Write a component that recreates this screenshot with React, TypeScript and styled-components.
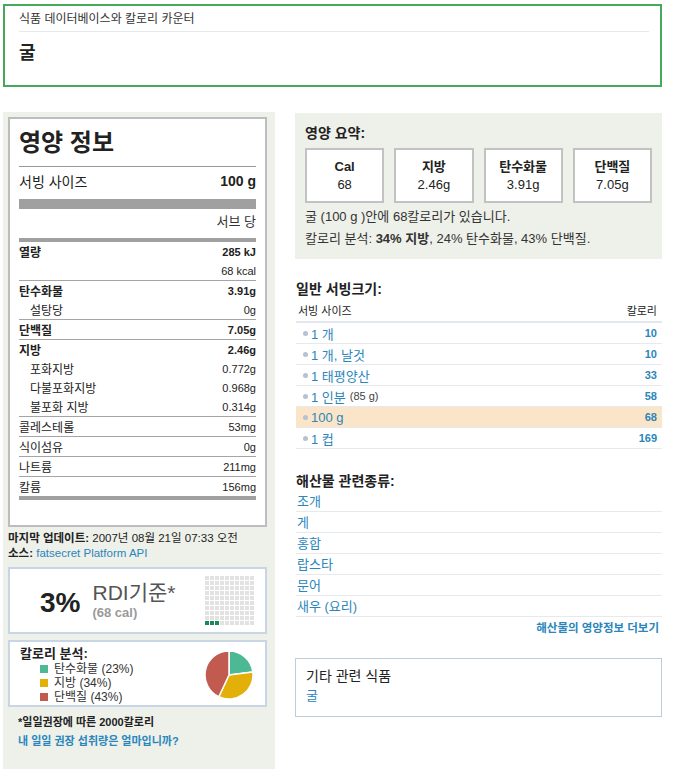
import React from 'react';
import styled, { createGlobalStyle } from 'styled-components';

const FONT = `"Liberation Sans", Arial, "Noto Sans CJK KR", sans-serif`;
const LINK = '#2a86bb';
const PANEL = '#eef0ea';

const GlobalStyle = createGlobalStyle`
  html, body {
    margin: 0;
    padding: 0;
    background: #fff;
    font-family: ${FONT};
    color: #333;
  }
`;

const Page = styled.div`
  padding: 4px 13px 0 3px;
`;

const Header = styled.header`
  border: 2px solid #46a85a;
  height: 79px;
  padding: 0 11px 0 14px;
`;

const Crumb = styled.div`
  font-size: 12px;
  line-height: 15px;
  padding: 6px 0 4px;
  color: #333;
  border-bottom: 1px solid #e4e9ef;
`;

const Title = styled.h1`
  margin: 0;
  padding-top: 9px;
  font-size: 18px;
  line-height: 24px;
  font-weight: bold;
  color: #222;
`;

const Columns = styled.div`
  display: flex;
  gap: 20px;
  margin-top: 25px;
`;

const LeftCol = styled.aside`
  width: 259px;
  flex: none;
  background: ${PANEL};
  padding: 5px 8px 40px 5px;
`;

const RightCol = styled.main`
  flex: 1;
  padding-top: 1px;
`;

/* ---------- nutrition facts ---------- */

const Facts = styled.section`
  background: #fff;
  border: 2px solid #bdbdbd;
  padding: 0 9px 25px;
`;

const FactsTitle = styled.h2`
  margin: 0;
  padding-top: 9px;
  padding-bottom: 8px;
  font-size: 24px;
  line-height: 30px;
  font-weight: bold;
  color: #222;
  border-bottom: 1px solid #999;
`;

const ServingLine = styled.div`
  display: flex;
  justify-content: space-between;
  align-items: center;
  height: 28px;
  padding-bottom: 4px;
  font-size: 14px;
  color: #222;
`;

const Strong = styled.b`
  font-weight: bold;
`;

const Bar = styled.div<{ $h: number }>`
  height: ${(p) => p.$h}px;
  background: #a0a0a0;
`;

const PerServe = styled.div`
  text-align: right;
  font-size: 13px;
  height: 29px;
  line-height: 26px;
  color: #333;
`;

const FactRow = styled.div<{ $indent?: boolean; $line?: boolean }>`
  display: flex;
  justify-content: space-between;
  align-items: center;
  height: 19px;
  font-size: 11px;
  color: #333;
  padding-left: ${(p) => (p.$indent ? '11px' : '0')};
  border-bottom: ${(p) => (p.$line ? '1px solid #a5a5a5' : 'none')};
`;

const FactLabel = styled.span<{ $bold?: boolean }>`
  font-size: 12px;
  font-weight: ${(p) => (p.$bold ? 'bold' : 'normal')};
  color: #222;
`;

const FactValue = styled.span<{ $bold?: boolean }>`
  font-weight: ${(p) => (p.$bold ? 'bold' : 'normal')};
  color: #222;
`;

const Meta = styled.div`
  font-size: 11.5px;
  line-height: 15px;
  color: #222;
  padding: 4px 0 0;
`;

const MetaLink = styled.a`
  color: ${LINK};
  text-decoration: none;
`;

const InfoBox = styled.div`
  background: #fff;
  border: 2px solid #c7d5e4;
  display: flex;
  align-items: center;
`;

const RdiBox = styled(InfoBox)`
  margin-top: 6px;
  height: 63px;
  padding: 0 11px 0 30px;
`;

const RdiPct = styled.div`
  font-size: 28px;
  font-weight: bold;
  color: #222;
  line-height: 30px;
  margin-top: 4px;
`;

const RdiText = styled.div`
  margin-left: 12px;
  display: flex;
  flex-direction: column;
`;

const RdiLabel = styled.span`
  font-size: 21px;
  line-height: 24px;
  color: #555;
`;

const RdiCal = styled.span`
  font-size: 13px;
  line-height: 16px;
  font-weight: bold;
  color: #9a9a9a;
`;

const Grid = styled.div`
  margin-left: auto;
  display: grid;
  grid-template-columns: repeat(10, 4px);
  grid-auto-rows: 4px;
  gap: 1px;
`;

const Cell = styled.span<{ $on?: boolean }>`
  background: ${(p) => (p.$on ? '#1a8a5c' : '#e2e2e2')};
`;

const BreakBox = styled(InfoBox)`
  margin-top: 6px;
  height: 63px;
  padding: 0 11px 0 10px;
  align-items: flex-start;
`;

const BreakText = styled.div`
  padding-top: 3px;
`;

const BreakTitle = styled.div`
  font-size: 13px;
  font-weight: bold;
  line-height: 17px;
  color: #222;
`;

const Legend = styled.ul`
  list-style: none;
  margin: 0;
  padding: 0 0 0 20px;
`;

const LegendItem = styled.li`
  display: flex;
  align-items: center;
  gap: 6px;
  font-size: 12px;
  line-height: 14px;
  color: #333;
`;

const Swatch = styled.span<{ $c: string }>`
  width: 8px;
  height: 8px;
  background: ${(p) => p.$c};
`;

const PieWrap = styled.div`
  margin-left: auto;
  margin-top: 8px;
`;

const Note = styled.div<{ $link?: boolean }>`
  font-size: 11px;
  font-weight: bold;
  line-height: 19px;
  padding-left: 10px;
  color: ${(p) => (p.$link ? LINK : '#222')};
`;

const Notes = styled.div`
  padding-top: 6px;
`;

/* ---------- right column ---------- */

const Summary = styled.section`
  background: ${PANEL};
  padding: 10px 10px 9px;
`;

const SectionTitle = styled.h3`
  margin: 0;
  font-size: 14px;
  line-height: 20px;
  font-weight: bold;
  color: #222;
`;

const Tiles = styled.div`
  display: grid;
  grid-template-columns: repeat(4, 1fr);
  gap: 10px;
  margin-top: 5px;
`;

const Tile = styled.div`
  background: #fff;
  border: 2px solid #c2c2c2;
  height: 51px;
  display: flex;
  flex-direction: column;
  align-items: center;
  justify-content: center;
  font-size: 13px;
  line-height: 18px;
  color: #222;
`;

const TileLabel = styled.b`
  font-weight: bold;
`;

const SumLine = styled.div`
  font-size: 13px;
  line-height: 22px;
  color: #333;
`;

const SumLines = styled.div`
  margin-top: 3px;
`;

const Section = styled.section<{ $gap?: number }>`
  margin-top: ${(p) => p.$gap ?? 20}px;
  padding-left: 1px;
`;

const TableHead = styled.div`
  display: flex;
  justify-content: space-between;
  font-size: 11px;
  line-height: 19px;
  color: #222;
  padding: 3px 5px 0 2px;
  border-bottom: 2px solid #e3e8ee;
`;

const ServRow = styled.div<{ $active?: boolean }>`
  display: flex;
  align-items: center;
  height: 20px;
  padding: 0 5px 0 7px;
  border-bottom: 1px solid #e6eaef;
  background: ${(p) => (p.$active ? '#fbe5c8' : 'transparent')};
`;

const Dot = styled.span`
  width: 5px;
  height: 5px;
  border-radius: 50%;
  background: #b6c2d1;
  margin-right: 3px;
`;

const ServLink = styled.a`
  font-size: 13px;
  color: ${LINK};
  text-decoration: none;
`;

const ServNote = styled.span`
  font-size: 11px;
  color: #444;
  margin-left: 4px;
`;

const ServCal = styled.span`
  margin-left: auto;
  font-size: 11px;
  font-weight: bold;
  color: ${LINK};
`;

const ListRow = styled.div`
  height: 20px;
  line-height: 20px;
  border-bottom: 1px solid #e6eaef;
  padding-left: 1px;
`;

const ListLink = styled.a`
  font-size: 13px;
  color: ${LINK};
  text-decoration: none;
`;

const More = styled.a`
  display: block;
  text-align: right;
  font-size: 11.5px;
  font-weight: bold;
  line-height: 22px;
  padding-right: 3px;
  color: ${LINK};
  text-decoration: none;
`;

const Related = styled.section`
  margin-top: 19px;
  border: 1px solid #bccddc;
  padding: 9px 10px 12px;
`;

const RelatedTitle = styled.div`
  font-size: 14px;
  line-height: 17px;
  color: #222;
`;

/* ---------- data ---------- */

const facts: { label: string; value: string; bold?: boolean; indent?: boolean; line?: boolean }[] = [
  { label: '열량', value: '285 kJ', bold: true },
  { label: '', value: '68 kcal', line: true },
  { label: '탄수화물', value: '3.91g', bold: true },
  { label: '설탕당', value: '0g', indent: true, line: true },
  { label: '단백질', value: '7.05g', bold: true, line: true },
  { label: '지방', value: '2.46g', bold: true },
  { label: '포화지방', value: '0.772g', indent: true },
  { label: '다불포화지방', value: '0.968g', indent: true },
  { label: '불포화 지방', value: '0.314g', indent: true, line: true },
  { label: '콜레스테롤', value: '53mg', line: true },
  { label: '식이섬유', value: '0g', line: true },
  { label: '나트륨', value: '211mg', line: true },
  { label: '칼륨', value: '156mg' },
];

const servings: { label: string; note?: string; cal: string; active?: boolean }[] = [
  { label: '1 개', cal: '10' },
  { label: '1 개, 날것', cal: '10' },
  { label: '1 태평양산', cal: '33' },
  { label: '1 인분', note: '(85 g)', cal: '58' },
  { label: '100 g', cal: '68', active: true },
  { label: '1 컵', cal: '169' },
];

const seafood = ['조개', '게', '홍합', '랍스타', '문어', '새우 (요리)'];

const slices = [
  { pct: 23, color: '#4cb894' },
  { pct: 34, color: '#e2b008' },
  { pct: 43, color: '#c15a4f' },
];

const Pie: React.FC = () => {
  const r = 24;
  const c = 25;
  let start = -90;
  return (
    <svg width="50" height="50" viewBox="0 0 50 50">
      {slices.map((s) => {
        const sweep = (s.pct / 100) * 360;
        const a0 = (start * Math.PI) / 180;
        const a1 = ((start + sweep) * Math.PI) / 180;
        start += sweep;
        const x0 = c + r * Math.cos(a0);
        const y0 = c + r * Math.sin(a0);
        const x1 = c + r * Math.cos(a1);
        const y1 = c + r * Math.sin(a1);
        const large = sweep > 180 ? 1 : 0;
        return (
          <path
            key={s.color}
            d={`M${c},${c} L${x0},${y0} A${r},${r} 0 ${large} 1 ${x1},${y1} Z`}
            fill={s.color}
            stroke="#fff"
            strokeWidth="1.5"
            strokeLinejoin="round"
          />
        );
      })}
    </svg>
  );
};

export default function App() {
  return (
    <Page>
      <GlobalStyle />
      <Header>
        <Crumb>식품 데이터베이스와 칼로리 카운터</Crumb>
        <Title>굴</Title>
      </Header>

      <Columns>
        <LeftCol>
          <Facts>
            <FactsTitle>영양 정보</FactsTitle>
            <ServingLine>
              <span>서빙 사이즈</span>
              <Strong>100 g</Strong>
            </ServingLine>
            <Bar $h={10} />
            <PerServe>서브 당</PerServe>
            <Bar $h={4} />
            {facts.map((f, i) => (
              <FactRow key={i} $indent={f.indent} $line={f.line}>
                <FactLabel $bold={f.bold}>{f.label}</FactLabel>
                <FactValue $bold={f.bold}>{f.value}</FactValue>
              </FactRow>
            ))}
            <Bar $h={4} />
          </Facts>

          <Meta>
            <Strong>마지막 업데이트:</Strong> 2007년 08월 21일 07:33 오전
            <br />
            <Strong>소스:</Strong> <MetaLink href="#">fatsecret Platform API</MetaLink>
          </Meta>

          <RdiBox>
            <RdiPct>3%</RdiPct>
            <RdiText>
              <RdiLabel>RDI기준*</RdiLabel>
              <RdiCal>(68 cal)</RdiCal>
            </RdiText>
            <Grid>
              {Array.from({ length: 100 }, (_, i) => (
                <Cell key={i} $on={i >= 90 && i < 93} />
              ))}
            </Grid>
          </RdiBox>

          <BreakBox>
            <BreakText>
              <BreakTitle>칼로리 분석:</BreakTitle>
              <Legend>
                <LegendItem>
                  <Swatch $c="#4cb894" />탄수화물 (23%)
                </LegendItem>
                <LegendItem>
                  <Swatch $c="#e2b008" />지방 (34%)
                </LegendItem>
                <LegendItem>
                  <Swatch $c="#c15a4f" />단백질 (43%)
                </LegendItem>
              </Legend>
            </BreakText>
            <PieWrap>
              <Pie />
            </PieWrap>
          </BreakBox>

          <Notes>
            <Note>*일일권장에 따른 2000칼로리</Note>
            <Note $link>내 일일 권장 섭취량은 얼마입니까?</Note>
          </Notes>
        </LeftCol>

        <RightCol>
          <Summary>
            <SectionTitle>영양 요약:</SectionTitle>
            <Tiles>
              <Tile>
                <TileLabel>Cal</TileLabel>
                <span>68</span>
              </Tile>
              <Tile>
                <TileLabel>지방</TileLabel>
                <span>2.46g</span>
              </Tile>
              <Tile>
                <TileLabel>탄수화물</TileLabel>
                <span>3.91g</span>
              </Tile>
              <Tile>
                <TileLabel>단백질</TileLabel>
                <span>7.05g</span>
              </Tile>
            </Tiles>
            <SumLines>
              <SumLine>굴 (100 g )안에 68칼로리가 있습니다.</SumLine>
              <SumLine>
                칼로리 분석: <Strong>34% 지방</Strong>, 24% 탄수화물, 43% 단백질.
              </SumLine>
            </SumLines>
          </Summary>

          <Section>
            <SectionTitle>일반 서빙크기:</SectionTitle>
            <TableHead>
              <span>서빙 사이즈</span>
              <span>칼로리</span>
            </TableHead>
            {servings.map((s) => (
              <ServRow key={s.label} $active={s.active}>
                <Dot />
                <ServLink href="#">{s.label}</ServLink>
                {s.note && <ServNote>{s.note}</ServNote>}
                <ServCal>{s.cal}</ServCal>
              </ServRow>
            ))}
          </Section>

          <Section $gap={22}>
            <SectionTitle>해산물 관련종류:</SectionTitle>
            {seafood.map((s) => (
              <ListRow key={s}>
                <ListLink href="#">{s}</ListLink>
              </ListRow>
            ))}
            <More href="#">해산물의 영양정보 더보기</More>
          </Section>

          <Related>
            <RelatedTitle>기타 관련 식품</RelatedTitle>
            <ListLink href="#">굴</ListLink>
          </Related>
        </RightCol>
      </Columns>
    </Page>
  );
}
